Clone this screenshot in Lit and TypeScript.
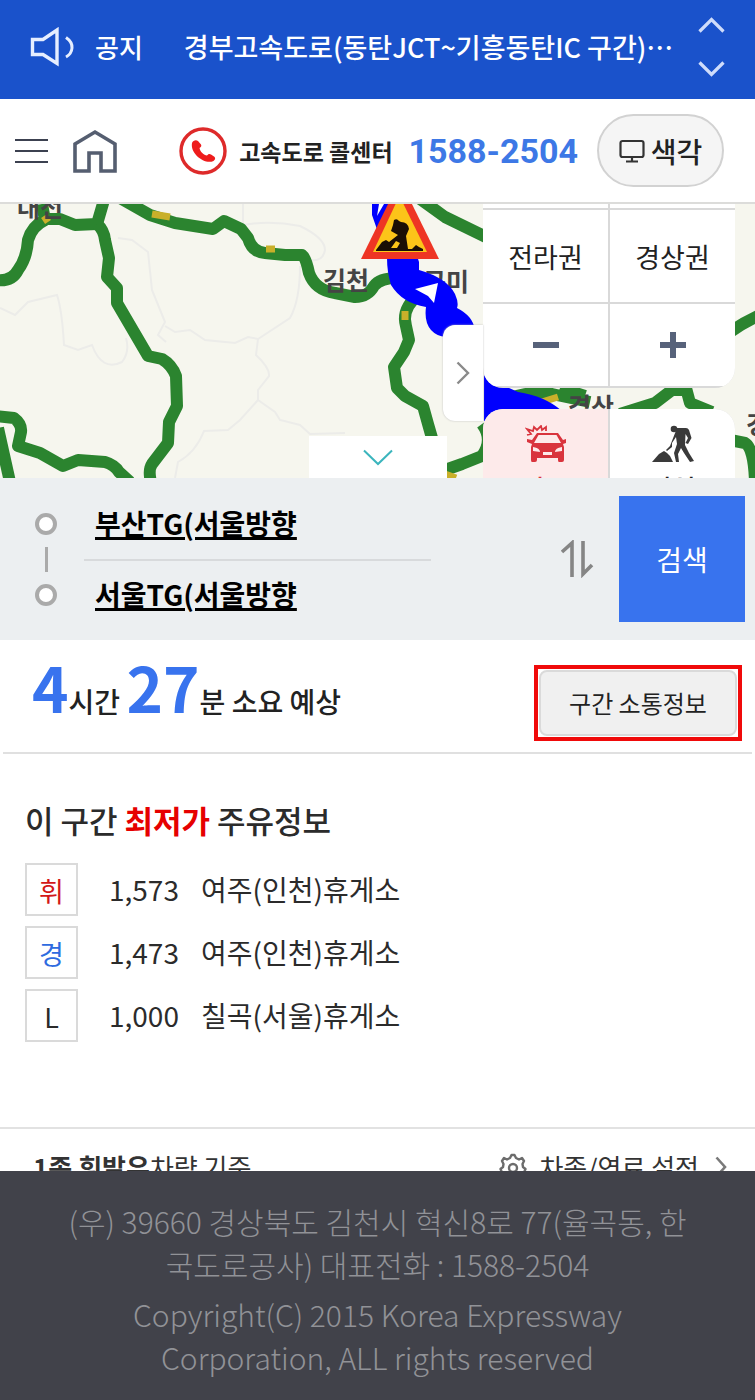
import { LitElement, html, css, svg } from "lit";
import { customElement } from "lit/decorators.js";

const base = css`
  :host,
  * {
    box-sizing: border-box;
  }
  button,
  a {
    font: inherit;
    color: inherit;
    background: none;
    border: 0;
    padding: 0;
    margin: 0;
    text-decoration: none;
    cursor: pointer;
  }
  svg {
    display: block;
  }
`;

@customElement("notice-bar")
class NoticeBar extends LitElement {
  static styles = [
    base,
    css`
      :host {
        display: flex;
        align-items: center;
        height: 99px;
        padding: 0 30px 6px;
        background: #1a52cb;
        color: #fff;
        font-weight: 500;
      }
      .label {
        margin-left: 20px;
        font-size: 26px;
        line-height: 40px;
      }
      .title {
        flex: 1;
        min-width: 0;
        margin-left: 41px;
        font-size: 27px;
        line-height: 40px;
        white-space: nowrap;
      }
      .arrows {
        display: flex;
        flex-direction: column;
        gap: 28px;
      }
      .arrows button {
        display: block;
      }
    `,
  ];
  render() {
    return html`
      <svg width="45" height="40" viewBox="0 0 45 40" fill="none" stroke="#e6eeff" stroke-width="3.4">
        <path d="M2.5 12.500H13L27 3V36.500L13 27.500H2.500Z" />
        <path d="M36 10.500Q42.500 15 42 21Q41.500 27 36 30" stroke-width="3" />
      </svg>
      <span class="label">공지</span>
      <a class="title" href="#notice">경부고속도로(동탄JCT~기흥동탄IC 구간)⋯</a>
      <div class="arrows">
        <button aria-label="이전 공지">
          <svg width="27" height="16" viewBox="0 0 27 16" fill="none" stroke="#cfdcfb" stroke-width="3.2">
            <path d="M1.500 14.500L13.500 2.500L25.500 14.500" />
          </svg>
        </button>
        <button aria-label="다음 공지">
          <svg width="27" height="16" viewBox="0 0 27 16" fill="none" stroke="#cfdcfb" stroke-width="3.2">
            <path d="M1.500 1.500L13.500 13.500L25.500 1.500" />
          </svg>
        </button>
      </div>
    `;
  }
}

@customElement("main-nav")
class MainNav extends LitElement {
  static styles = [
    base,
    css`
      :host {
        display: flex;
        align-items: center;
        height: 105px;
        padding: 0 31px 0 15px;
        border-bottom: 2px solid #dcdcda;
        background: #fff;
        color: #222;
      }
      .home {
        margin-left: 25px;
      }
      .right {
        display: flex;
        align-items: center;
        gap: 19px;
        margin-left: auto;
      }
      .call {
        display: flex;
        align-items: center;
        gap: 12px;
        font-size: 23px;
        font-weight: 700;
        line-height: 40px;
        white-space: nowrap;
      }
      .number {
        margin-left: 4px;
        font-family: Roboto, "Noto Sans CJK KR", sans-serif;
        font-size: 34px;
        color: #3d78e6;
      }
      .color {
        display: flex;
        align-items: center;
        justify-content: center;
        gap: 6px;
        width: 127px;
        height: 73px;
        border: 2px solid #d2d2d2;
        border-radius: 37px;
        background: #f5f5f5;
        font-size: 28px;
        font-weight: 500;
      }
    `,
  ];
  render() {
    return html`
      <button aria-label="메뉴">
        <svg width="33" height="26" viewBox="0 0 33 26" stroke="#3c4150" stroke-width="2">
          <path d="M0 2H33M0 13H33M0 24H33" />
        </svg>
      </button>
      <a class="home" href="#home" aria-label="홈">
        <svg width="44" height="44" viewBox="0 0 44 44" fill="none" stroke="#555e70" stroke-width="3.600">
          <path d="M2 42V15L22 3L42 15V42H28V24H16V42Z" />
        </svg>
      </a>
      <div class="right">
        <a class="call" href="tel:1588-2504">
          <svg width="48" height="48" viewBox="0 0 48 48">
            <circle cx="24" cy="24" r="22" fill="#fff" stroke="#de2a2a" stroke-width="3.400" />
            <path
              d="M13 16C14 13.500 17 12.500 19 14L22 17.500C22.800 19 22 20 20.500 21C21 24.500 25 28.500 28 28.500C29 27 30.500 26.500 32 27.500L35 29.500C37 31 36 33 34.500 34C26 38 11 27 13 16Z"
              fill="#ee1c1c"
            />
          </svg>
          <span>고속도로 콜센터</span>
          <span class="number">1588-2504</span>
        </a>
        <button class="color">
          <svg width="26" height="24" viewBox="0 0 26 24" fill="none" stroke="#333" stroke-width="2.200">
            <rect x="1.500" y="2" width="23" height="16" rx="2" />
            <path d="M13 18V22M7 22.500H19" />
          </svg>
          색각
        </button>
      </div>
    `;
  }
}

const roads = [
  "M-4 280Q12 282 18 270Q27 258 28 240Q32 226 45 220L42 204M45 219L60 219L75 225L97 224L104 200",
  "M97 224Q104 230 105 240L109 258L107 277L117 288V303L148 356L162 359Q172 365 176 376L177 406L169 422L168 443L152 464Q148 470 151 482",
  "M120 198L150 215L175 223L213 229L224 221L241 229L248 238Q252 252 265 253L285 255L302 255Q306 258 309 273Q315 290 335 293L355 297Q368 297 374 286Q380 278 397 278",
  "M-4 416L14 418Q22 424 21 432L18 446L40 453L63 466L78 460L105 462Q115 465 119 472L130 482",
  "M-2 428L10 482",
  "M416 196L445 217L486 237",
  "M413 300Q402 312 406 326L409 340L404 352L394 367L397 388L405 396L423 406L428 424L432 438",
  "M445 470L462 464L482 456Q494 440 482 424",
  "M505 400Q530 390 552 394L590 402M560 388L585 396",
  "M620 414L655 403L672 390H692M686 388L690 403L712 412",
  "M730 332Q744 322 760 315",
  "M730 440L745 443Q754 448 755 482",
];

const borders = [
  "M0 308L15 315L28 302L57 295Q62 310 64 345L78 350L92 345Q102 372 122 362Q130 352 126 338",
  "M118 238L132 240L148 252L152 290L165 322L158 335L166 342M165 326L175 332L190 330L205 340L235 343L248 337L258 339L290 318Q300 300 300 266",
  "M243 204V225Q270 220 300 226Q325 238 325 250Q323 262 310 260",
  "M258 339L256 355Q270 368 269 376L258 390L258 400L240 420L228 430L204 431Q196 452 178 462L175 478M258 400L275 412L280 420L300 425L310 434L345 433",
];

@customElement("traffic-map")
class TrafficMap extends LitElement {
  static styles = [
    base,
    css`
      :host {
        display: block;
        position: relative;
        height: 274px;
        overflow: hidden;
        background: #f6f6ee;
        color: #222;
      }
      .map {
        width: 100%;
        height: 100%;
      }
      .place {
        font-size: 25px;
        font-weight: 700;
        fill: #444;
      }
      .panel {
        position: absolute;
        right: 20px;
        width: 252px;
        display: grid;
        grid-template-columns: 1fr 1fr;
        gap: 2px;
        overflow: hidden;
        background: #d9d9d9;
      }
      .regions {
        top: 0;
        padding-bottom: 2px;
        border-radius: 0 0 20px 20px;
        grid-template-rows: 4px 92px 82px;
        font-size: 27px;
      }
      .layers {
        top: 205px;
        border-radius: 20px 20px 0 0;
        font-size: 25px;
        font-weight: 500;
        line-height: 32px;
      }
      .panel button {
        display: flex;
        flex-direction: column;
        align-items: center;
        justify-content: center;
        background: #fff;
      }
      .layers button {
        justify-content: flex-start;
        gap: 8px;
        padding-top: 16px;
      }
      .panel .accident {
        background: #fdeaea;
        color: #d9343d;
      }
      .side {
        position: absolute;
        top: 121px;
        right: 272px;
        width: 40px;
        height: 96px;
        display: grid;
        place-items: center;
        border-radius: 12px 0 0 12px;
        background: #fff;
        box-shadow: 0 0 2px #bbb;
      }
      .fold {
        position: absolute;
        left: 0;
        right: 0;
        bottom: 0;
        width: 138px;
        height: 42px;
        margin: 0 auto;
        display: grid;
        place-items: center;
        background: #fff;
      }
    `,
  ];
  render() {
    return html`
      <svg class="map" viewBox="0 204 755 274" preserveAspectRatio="xMidYMin slice" role="img" aria-label="교통 지도">
        <g fill="none" stroke="#ecece9" stroke-width="2">${borders.map((d) => svg`<path d=${d} />`)}</g>
        <g fill="none" stroke="#2b842f" stroke-width="12" stroke-linejoin="round">
          ${roads.map((d) => svg`<path d=${d} />`)}
        </g>
        <g fill="none" stroke="#c9b02a" stroke-width="7">
          <path d="M152 214L170 217M266 249H275M405 311V320M44 216L48 222M532 405L558 397M445 474L456 478" />
        </g>
        <text class="place" x="17" y="217">대전</text>
        <text class="place" x="323" y="290">김천</text>
        <text class="place" x="423" y="291">구미</text>
        <text class="place" x="568" y="416">경산</text>
        <text class="place" x="746" y="434">경주</text>
        <path
          fill="#0000fe"
          d="M372 203H400L419 262V270Q447 278 455 294Q459 303 457 308Q473 316 475 330L500 370V384Q507 387 518 392Q545 396 562 411L484 421V350L455 335Q440 340 431 330Q424 322 426 307Q402 303 391 285Q387 272 387 258L372 215Z"
        />
        <path fill="#fff" d="M415 289L438 283L434 303L428 296Z" />
        <path fill="#fff" d="M377 216L384 204H379Z" />
        <path fill="#ee3524" d="M392 196H408L439 259H361Z" />
        <path fill="#fcc419" d="M397 201H402L427 252H373Z" />
        <path
          fill="#1a0e05"
          d="M376 250L382 242L386 240L389 242L398 235L391 231L393 225L394 220Q397 218 399 221L401 222Q408 222 409 229L406 236L408 249H412L416 245L419 247L423 249V251H376ZM396 241L391 248H397L400 243Z"
        />
      </svg>
      <div class="panel regions">
        <button aria-label="수도권"></button>
        <button aria-label="충청권"></button>
        <button>전라권</button>
        <button>경상권</button>
        <button aria-label="축소">
          <svg width="26" height="26" viewBox="0 0 26 26" stroke="#57627a" stroke-width="6">
            <path d="M0 13H26" />
          </svg>
        </button>
        <button aria-label="확대">
          <svg width="26" height="26" viewBox="0 0 26 26" stroke="#57627a" stroke-width="6">
            <path d="M0 13H26M13 0V26" />
          </svg>
        </button>
      </div>
      <div class="panel layers">
        <button class="accident" aria-pressed="true">
          <svg width="42" height="38" viewBox="0 0 42 38">
            <path
              d="M2 10L6 9L2 4L8 6L9 2L12 5L16 1L17 5L21 2V6"
              fill="none"
              stroke="#d9343d"
              stroke-width="1.800"
            />
            <path
              fill="#d9343d"
              fill-rule="evenodd"
              d="M12 8H33L38 15L41 14V18L38 19L39 22V35Q39 37 37 37H34Q33 37 33 35V33H12V35Q12 37 10 37H7Q6 37 6 35V22L7 19L2 17V14L7 15ZM13.500 10L9 18H36L31.500 10ZM8 22V26L15 27Q15 23 8 22ZM37 22Q30 23 30 27L37 26ZM18 27V30H27V27Z"
            />
          </svg>
          사고
        </button>
        <button>
          <svg width="44" height="38" viewBox="0 0 44 38" fill="#3a3a3a">
            <circle cx="23" cy="4" r="3.300" />
            <path
              d="M26 3H35Q37 3 38 5L40.500 13L37 19L34.500 18L37 13L34.500 9L34 20L38 28L43 36L39 37L33 28L30 23L27 29L28 37H25L23 28L26 19L25 12L21 18V22L16 26L15 25L19 21Z"
            />
            <path d="M1 37L8 29L13 26L16 28L19 31L22 37Z" />
          </svg>
          작업
        </button>
      </div>
      <button class="side" aria-label="펼치기">
        <svg width="14" height="24" viewBox="0 0 14 24" fill="none" stroke="#8a8a8a" stroke-width="2.400">
          <path d="M1.500 1.500L12 12L1.500 22.500" />
        </svg>
      </button>
      <button class="fold" aria-label="지도 접기">
        <svg width="30" height="17" viewBox="0 0 30 17" fill="none" stroke="#3bb5bd" stroke-width="2">
          <path d="M1 1.500L15 15L29 1.500" />
        </svg>
      </button>
    `;
  }
}

@customElement("route-search")
class RouteSearch extends LitElement {
  static styles = [
    base,
    css`
      :host {
        display: flex;
        align-items: center;
        padding: 11px 10px 11px 35px;
        background: #eceff1;
      }
      .marks {
        display: flex;
        flex-direction: column;
        align-items: center;
        gap: 12px;
      }
      .dot {
        width: 22px;
        height: 22px;
        border: 4px solid #aaa;
        border-radius: 50%;
        background: #fff;
      }
      .line {
        width: 3px;
        height: 25px;
        background: #aaa;
      }
      .fields {
        flex: 1;
        max-width: 347px;
        margin-left: 27px;
      }
      .fields button {
        display: block;
        width: 100%;
        height: 70px;
        padding: 0 0 2px 11px;
        text-align: left;
        font-size: 28px;
        font-weight: 700;
        line-height: 40px;
        color: #000;
        text-decoration: underline;
        text-decoration-thickness: 3px;
        text-underline-offset: 2px;
      }
      .fields button + button {
        border-top: 2px solid #d8dadc;
      }
      .swap {
        margin-left: auto;
      }
      .search {
        width: 126px;
        height: 126px;
        margin-left: 25px;
        background: #3873ee;
        color: #fff;
        font-size: 28px;
      }
    `,
  ];
  render() {
    return html`
      <div class="marks">
        <span class="dot"></span>
        <span class="line"></span>
        <span class="dot"></span>
      </div>
      <div class="fields">
        <button>부산TG(서울방향</button>
        <button>서울TG(서울방향</button>
      </div>
      <button class="swap" aria-label="출발지와 도착지 바꾸기">
        <svg width="33" height="38" viewBox="0 0 33 38" fill="none" stroke="#858585" stroke-width="3.600">
          <path d="M1 12L11 3V37M22 1V34L31 25" />
        </svg>
      </button>
      <button class="search">검색</button>
    `;
  }
}

@customElement("travel-time")
class TravelTime extends LitElement {
  static styles = [
    base,
    css`
      :host {
        display: flex;
        align-items: flex-start;
        justify-content: space-between;
        height: 114px;
        margin: 0 3px;
        padding: 21px 10px 0 29px;
        border-bottom: 2px solid #e0e0e0;
        color: #222;
      }
      .time {
        margin: 0;
        font-size: 28px;
        font-weight: 500;
        line-height: 50px;
        white-space: nowrap;
      }
      .time b {
        font-size: 62px;
        color: #3873ee;
      }
      .frame {
        margin-top: 4px;
        padding: 1px;
        border: 4px solid #f00a0a;
      }
      .info {
        display: block;
        width: 198px;
        height: 66px;
        padding-bottom: 2px;
        border: 2px solid #dadada;
        border-radius: 8px;
        background: #f0f0f0;
        font-size: 24px;
      }
    `,
  ];
  render() {
    return html`
      <p class="time"><b>4</b>시간 <b>27</b>분 소요 예상</p>
      <div class="frame"><button class="info">구간 소통정보</button></div>
    `;
  }
}

@customElement("fuel-prices")
class FuelPrices extends LitElement {
  static styles = [
    base,
    css`
      :host {
        display: block;
        padding: 42px 25px 80px;
        color: #2b2b2b;
      }
      h2 {
        margin: 0;
        font-size: 31px;
        font-weight: 500;
        line-height: 48px;
      }
      h2 b {
        color: #e60000;
      }
      table {
        margin-top: 14px;
        border-collapse: collapse;
        font-size: 28px;
        line-height: 40px;
      }
      th,
      td {
        height: 63px;
        padding: 0;
        text-align: left;
        font-weight: 400;
        vertical-align: middle;
      }
      .kind {
        display: block;
        width: 53px;
        height: 53px;
        border: 2px solid #dadada;
        font-size: 27px;
        line-height: 52px;
        text-align: center;
      }
      .gasoline {
        color: #d31818;
      }
      .diesel {
        color: #2e6be0;
      }
      td {
        padding-bottom: 2px;
      }
      .price {
        padding-left: 31px;
      }
      .station {
        padding-left: 22px;
      }
    `,
  ];
  rows = [
    { kind: "휘", tone: "gasoline", price: "1,573", station: "여주(인천)휴게소" },
    { kind: "경", tone: "diesel", price: "1,473", station: "여주(인천)휴게소" },
    { kind: "L", tone: "lpg", price: "1,000", station: "칠곡(서울)휴게소" },
  ];
  render() {
    return html`
      <h2>이 구간 <b>최저가</b> 주유정보</h2>
      <table>
        ${this.rows.map(
          (r) => html`<tr>
            <th scope="row"><span class="kind ${r.tone}">${r.kind}</span></th>
            <td class="price">${r.price}</td>
            <td class="station">${r.station}</td>
          </tr>`
        )}
      </table>
    `;
  }
}

@customElement("vehicle-bar")
class VehicleBar extends LitElement {
  static styles = [
    base,
    css`
      :host {
        display: flex;
        justify-content: space-between;
        height: 44px;
        overflow: hidden;
        padding: 18px 28px 0 33px;
        border-top: 2px solid #e2e2e2;
        font-size: 26px;
        line-height: 40px;
        color: #333;
        white-space: nowrap;
      }
      .set {
        display: flex;
        align-items: center;
        height: 40px;
      }
      .set span {
        margin: 0 16px 0 12px;
      }
    `,
  ];
  render() {
    return html`
      <div><b>1종 휘발유</b>차량 기준</div>
      <button class="set">
        <svg width="28" height="28" viewBox="0 0 28 28" fill="none" stroke="#6c6c6c" stroke-width="2.400" stroke-linejoin="round">
          <path
            d="M11 5L12.500 2H15.500L17 5L20 6.500L23 5L25 8L23.500 11L24 14L26.500 16L25 19.500L22 20L20 22.500V26H16L14 24L12 26H8V22.500L6 20L3 19.500L1.500 16L4 14L4.500 11L3 8L5 5L8 6.500Z"
          />
          <circle cx="14" cy="15" r="4" />
        </svg>
        <span>차종/연료 설정</span>
        <svg width="12" height="22" viewBox="0 0 12 22" fill="none" stroke="#7a7a7a" stroke-width="2.600">
          <path d="M1.500 1.500L10 11L1.500 20.500" />
        </svg>
      </button>
    `;
  }
}

@customElement("page-footer")
class PageFooter extends LitElement {
  static styles = [
    base,
    css`
      :host {
        display: block;
        flex: 1;
        padding: 29px 60px 14px;
        background: #41424a;
        color: #919297;
        font-size: 30px;
        font-weight: 300;
        line-height: 43px;
        text-align: center;
      }
      p {
        margin: 0 0 7px;
      }
    `,
  ];
  render() {
    return html`
      <p>(우) 39660 경상북도 김천시 혁신8로 77(율곡동, 한국도로공사) 대표전화 : 1588-2504</p>
      <p>Copyright(C) 2015 Korea Expressway Corporation, ALL rights reserved</p>
    `;
  }
}

@customElement("app-root")
class AppRoot extends LitElement {
  static styles = css`
    :host {
      display: flex;
      flex-direction: column;
      min-height: 100vh;
      background: #fff;
      font-family: "Noto Sans CJK KR", sans-serif;
    }
  `;
  render() {
    return html`
      <notice-bar></notice-bar>
      <main-nav></main-nav>
      <traffic-map></traffic-map>
      <route-search></route-search>
      <travel-time></travel-time>
      <fuel-prices></fuel-prices>
      <vehicle-bar></vehicle-bar>
      <page-footer></page-footer>
    `;
  }
}
